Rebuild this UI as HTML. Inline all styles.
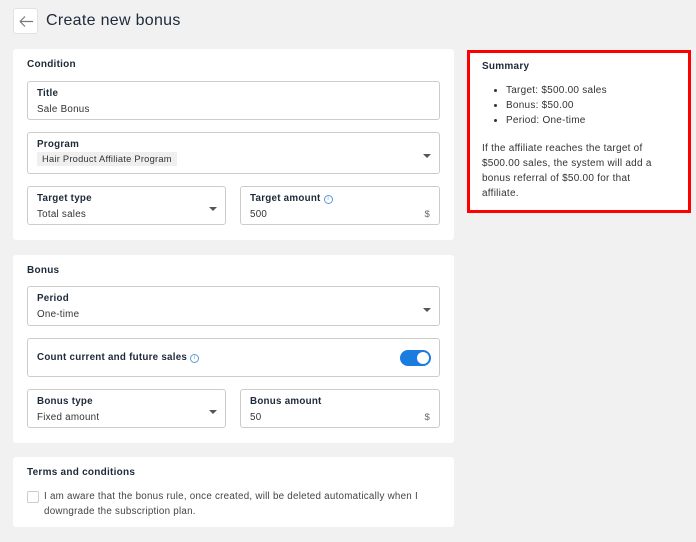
<!DOCTYPE html>
<html><head><style>
*{box-sizing:border-box;margin:0;padding:0}
body{width:696px;height:542px;background:#f1f1f1;font-family:"Liberation Sans",sans-serif;color:#1d2a3a;position:relative;overflow:hidden;letter-spacing:0.25px}
.abs{position:absolute}
.back{left:13px;top:8px;width:25px;height:26px;background:#fff;border:1px solid #e2e2e2;border-radius:3px}
h1{position:absolute;left:46px;top:12px;font-size:16px;font-weight:normal;color:#1d2a3a;letter-spacing:0.3px}
.card{position:absolute;left:13px;width:441px;background:#fff;border-radius:3px}
.sec{position:absolute;left:14px;font-size:10px;font-weight:bold}
.f{position:absolute;border:1px solid #ccc;border-radius:3px;background:#fff}
.lbl{position:absolute;left:9px;top:6px;font-size:9.8px;font-weight:bold}
.val{position:absolute;left:9px;font-size:9.8px;color:#333}
.arr{position:absolute;width:0;height:0;border-left:4px solid transparent;border-right:4px solid transparent;border-top:4px solid #555}
.dol{position:absolute;right:9px;font-size:9.5px;color:#666}
.info{display:inline-block;width:9px;height:9px;border:1px solid #5b9bd8;border-radius:50%;font-size:6px;color:#5b9bd8;text-align:center;line-height:7px;vertical-align:1px;margin-left:3px;font-weight:normal;letter-spacing:0}
</style></head><body>
<div class="abs back"><svg width="25" height="26" style="position:absolute;left:0;top:0"><path d="M6 12.5h13M6 12.5l5-5M6 12.5l5 5" stroke="#777" stroke-width="1.2" fill="none"/></svg></div>
<h1>Create new bonus</h1>

<div class="card" style="top:49px;height:191px">
<div class="sec" style="top:10px">Condition</div>
<div class="f" style="left:14px;top:32px;width:413px;height:39px"><div class="lbl">Title</div><div class="val" style="top:22px">Sale Bonus</div></div>
<div class="f" style="left:14px;top:83px;width:413px;height:42px"><div class="lbl">Program</div><div class="val" style="top:19px;left:9px;background:#efefef;padding:2px 5px;font-size:9.3px">Hair Product Affiliate Program</div><div class="arr" style="right:8px;top:21px"></div></div>
<div class="f" style="left:14px;top:137px;width:199px;height:39px"><div class="lbl">Target type</div><div class="val" style="top:22px">Total sales</div><div class="arr" style="right:8px;top:20px"></div></div>
<div class="f" style="left:227px;top:137px;width:200px;height:39px"><div class="lbl">Target amount<span class="info">i</span></div><div class="val" style="top:22px">500</div><div class="dol" style="top:22px">$</div></div>
</div>

<div class="card" style="top:255px;height:188px">
<div class="sec" style="top:10px">Bonus</div>
<div class="f" style="left:14px;top:31px;width:413px;height:40px"><div class="lbl">Period</div><div class="val" style="top:22px">One-time</div><div class="arr" style="right:8px;top:21px"></div></div>
<div class="f" style="left:14px;top:83px;width:413px;height:39px"><div class="lbl" style="top:13px">Count current and future sales<span class="info">i</span></div>
<div style="position:absolute;right:8px;top:11px;width:31px;height:16px;border-radius:8px;background:#1a7ce0"><div style="position:absolute;right:2px;top:2px;width:12px;height:12px;border-radius:50%;background:#fff"></div></div></div>
<div class="f" style="left:14px;top:134px;width:199px;height:39px"><div class="lbl">Bonus type</div><div class="val" style="top:22px">Fixed amount</div><div class="arr" style="right:8px;top:20px"></div></div>
<div class="f" style="left:227px;top:134px;width:200px;height:39px"><div class="lbl">Bonus amount</div><div class="val" style="top:22px">50</div><div class="dol" style="top:22px">$</div></div>
</div>

<div class="card" style="top:457px;height:70px">
<div class="sec" style="top:10px">Terms and conditions</div>
<div style="position:absolute;left:14px;top:34px;width:12px;height:12px;border:1px solid #ccc;border-radius:2px"></div>
<div style="position:absolute;left:31px;top:33px;font-size:9.8px;line-height:14.5px;color:#444;white-space:nowrap">I am aware that the bonus rule, once created, will be deleted automatically when I<br>downgrade the subscription plan.</div>
</div>

<div class="abs" style="left:467px;top:50px;width:224px;height:163px;background:#fff;border:3px solid #f00">
<div style="position:absolute;left:12px;top:8px;font-size:10px;font-weight:bold">Summary</div>
<ul style="position:absolute;left:20px;top:30px;font-size:10px;line-height:15px;padding-left:16px;color:#333;margin:0">
<li>Target: $500.00 sales</li><li>Bonus: $50.00</li><li>Period: One-time</li></ul>
<div style="position:absolute;left:12px;top:88px;font-size:10px;line-height:15px;color:#333;white-space:nowrap">If the affiliate reaches the target of<br>$500.00 sales, the system will add a<br>bonus referral of $50.00 for that<br>affiliate.</div>
</div>
</body></html>
